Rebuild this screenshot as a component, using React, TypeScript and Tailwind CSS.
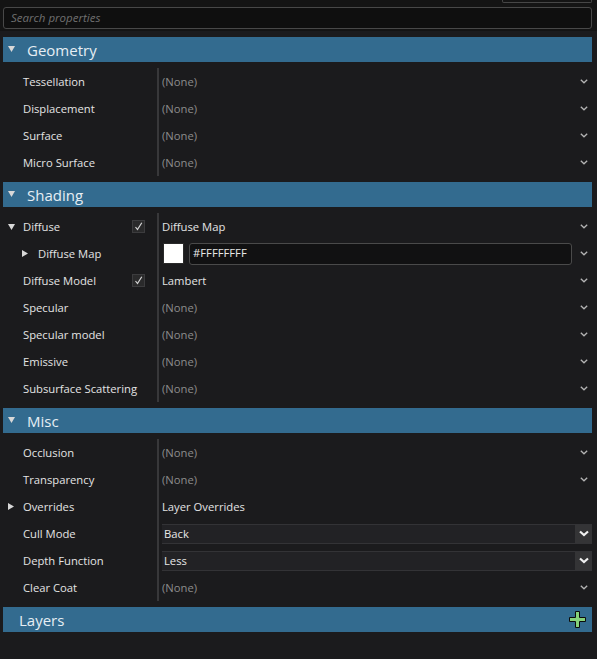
import React from "react";

type Row = {
  label: string;
  value?: string;
  kind?: "none" | "text" | "color" | "select";
  caret?: "down" | "right";
  indent?: boolean;
  check?: boolean;
  chevron?: boolean;
};

const geometry: Row[] = [
  { label: "Tessellation" },
  { label: "Displacement" },
  { label: "Surface" },
  { label: "Micro Surface" },
];

const shading: Row[] = [
  { label: "Diffuse", value: "Diffuse Map", kind: "text", caret: "down", check: true },
  { label: "Diffuse Map", value: "#FFFFFFFF", kind: "color", caret: "right", indent: true },
  { label: "Diffuse Model", value: "Lambert", kind: "text", check: true },
  { label: "Specular" },
  { label: "Specular model" },
  { label: "Emissive" },
  { label: "Subsurface Scattering" },
];

const misc: Row[] = [
  { label: "Occlusion" },
  { label: "Transparency" },
  { label: "Overrides", value: "Layer Overrides", kind: "text", caret: "right", chevron: false },
  { label: "Cull Mode", value: "Back", kind: "select" },
  { label: "Depth Function", value: "Less", kind: "select" },
  { label: "Clear Coat" },
];

function Caret({ dir }: { dir: "down" | "right" }) {
  return dir === "down" ? (
    <svg width="7" height="6" viewBox="0 0 7 6">
      <polygon points="0,0 7,0 3.5,6" fill="#d8d8d8" />
    </svg>
  ) : (
    <svg width="6" height="7" viewBox="0 0 6 7">
      <polygon points="0,0 6,3.5 0,7" fill="#d8d8d8" />
    </svg>
  );
}

function Chevron({ bold }: { bold?: boolean }) {
  return bold ? (
    <svg width="10" height="7" viewBox="0 0 10 7">
      <path d="M1 1.5 L5 5 L9 1.5" stroke="#f0f0f0" strokeWidth="2.2" fill="none" />
    </svg>
  ) : (
    <svg width="8" height="5" viewBox="0 0 8 5">
      <path d="M0.8 0.8 L4 3.8 L7.2 0.8" stroke="#b4b4b4" strokeWidth="1.3" fill="none" />
    </svg>
  );
}

function Check() {
  return (
    <div className="w-[13px] h-[13px] bg-[#2a2a2b] border border-[#3c3c3e] flex items-center justify-center">
      <svg width="9" height="9" viewBox="0 0 9 9">
        <path d="M1.5 5 L3.5 7.5 L7.8 0.8" stroke="#d6d6d6" strokeWidth="1.2" fill="none" />
      </svg>
    </div>
  );
}

function PropRow({ row }: { row: Row }) {
  const kind = row.kind ?? "none";
  return (
    <div className="flex h-[27px]">
      <div className="w-[154px] flex items-center relative">
        {row.caret && (
          <span className={`absolute flex items-center ${row.indent ? "left-[19px]" : "left-[5px]"}`}>
            <Caret dir={row.caret} />
          </span>
        )}
        <span className={`text-[#e4e4e4] pt-[2px] ${row.indent ? "pl-[35px]" : "pl-[20px]"}`}>{row.label}</span>
        {row.check && (
          <span className="absolute left-[129px]">
            <Check />
          </span>
        )}
      </div>
      <div className="w-[2px] bg-[#38383a]" />
      <div className="flex-1 flex items-center pl-[3px]">
        {kind === "none" && <span className="flex-1 pt-[2px] text-[#8c8c8c]">(None)</span>}
        {kind === "text" && <span className="flex-1 pt-[2px] text-[#e4e4e4]">{row.value}</span>}
        {kind === "color" && (
          <div className="flex-1 flex items-center gap-[5px] pl-[1px]">
            <div className="w-[21px] h-[21px] bg-white border border-[#2a2a2a]" />
            <div className="flex-1 h-[22px] bg-[#111112] border border-[#4a4a4a] rounded-[3px] flex items-center pl-[3px] text-[#e8e8e8] mr-[8px]">
              {row.value}
            </div>
          </div>
        )}
        {kind === "select" && (
          <div className="flex-1 h-[20px] flex bg-[#222225] border-t border-b border-[#333336]">
            <span className="flex-1 flex items-center pl-[2px] pt-[1px] text-[#e8e8e8]">{row.value}</span>
            <span className="w-[17px] bg-[#343436] flex items-center justify-center">
              <Chevron bold />
            </span>
          </div>
        )}
        {kind !== "select" && row.chevron !== false && (
          <span className="w-[13px] flex items-center justify-start mr-[-1px]">
            <Chevron />
          </span>
        )}
      </div>
    </div>
  );
}

function Header({ title, caret = true, plus }: { title: string; caret?: boolean; plus?: boolean }) {
  return (
    <div className="h-[25px] bg-[#336b8f] flex items-center relative">
      {caret && (
        <span className="absolute left-[5px] top-[9px] flex">
          <Caret dir="down" />
        </span>
      )}
      <span className={`text-[15px] text-[#e6eef4] pt-[2px] ${caret ? "pl-[24px]" : "pl-[16px]"}`}>{title}</span>
      {plus && (
        <span className="ml-auto mr-[6px] flex">
          <svg width="17" height="17" viewBox="0 0 17 17">
            <path
              d="M6.5 0.5 H10.5 V6.5 H16.5 V10.5 H10.5 V16.5 H6.5 V10.5 H0.5 V6.5 H6.5 Z"
              fill="#85d27a"
              stroke="#0b0b0b"
              strokeWidth="1"
            />
          </svg>
        </span>
      )}
    </div>
  );
}

function Section({ title, rows }: { title: string; rows: Row[] }) {
  return (
    <div>
      <Header title={title} />
      <div className="py-[6px]">
        {rows.map((r) => (
          <PropRow key={r.label} row={r} />
        ))}
      </div>
    </div>
  );
}

export default function App() {
  return (
    <div
      className="w-full h-[659px] bg-[#1b1b1d] text-[11.25px] overflow-hidden"
      style={{ fontFamily: '"Open Sans", "Noto Sans", sans-serif' }}
    >
      <div className="bg-[#141414] h-[31px] px-[3px] pr-[5px]">
        <div className="flex justify-end">
          <div className="w-[90px] h-[3px] border-x border-b border-[#464646] rounded-b-[2px]" />
        </div>
        <div className="mt-[4px] h-[22px] bg-[#0f0f0f] border border-[#484848] rounded-[3px] flex items-center pl-[7px]">
          <span className="italic text-[#6f6f6f] text-[11.5px]">Search properties</span>
        </div>
      </div>
      <div className="pl-[3px] pr-[5px] pt-[6px]">
        <Section title="Geometry" rows={geometry} />
        <Section title="Shading" rows={shading} />
        <Section title="Misc" rows={misc} />
        <Header title="Layers" caret={false} plus />
      </div>
    </div>
  );
}
